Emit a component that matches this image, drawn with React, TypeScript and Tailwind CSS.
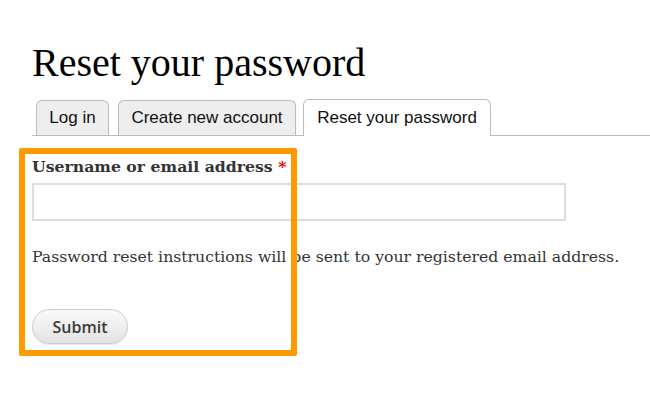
import React from "react";

export default function App() {
  return (
    <div className="relative w-[650px] h-[418px] bg-white overflow-hidden">
      <div className="pl-[32px] pt-[40px]">
        <h1 className="text-[40px] leading-[46px] text-black font-['Liberation_Serif',serif] font-normal">
          Reset your password
        </h1>
        <div className="mt-[13px] flex items-end border-b border-[#bbb] font-['Liberation_Sans',Arial,sans-serif] text-[17px] text-[#111]">
          <div className="ml-[4px] w-[73px] h-[35px] flex items-center justify-center bg-[#eee] border border-b-0 border-[#bbb] rounded-t-[6px]">
            Log in
          </div>
          <div className="ml-[9px] w-[178px] h-[35px] flex items-center justify-center bg-[#eee] border border-b-0 border-[#bbb] rounded-t-[6px]">
            Create new account
          </div>
          <div className="ml-[7px] w-[188px] h-[37px] flex items-center justify-center bg-white border border-b-0 border-[#bbb] rounded-t-[6px] -mb-px pb-px">
            Reset your password
          </div>
        </div>
        <div className="pt-[21px] font-['DejaVu_Serif',serif] text-[#333]">
          <label className="block font-bold text-[15.7px] leading-[20px]">
            Username or email address <span className="text-[#e00]">*</span>
          </label>
          <input
            type="text"
            className="mt-[6px] block w-[534px] h-[38px] border-2 border-[#ddd] bg-white outline-none"
          />
          <p className="mt-[26px] text-[15.7px] leading-[20px]">
            Password reset instructions will be sent to your registered email address.
          </p>
          <button className="mt-[42px] w-[96px] h-[35px] rounded-full border border-[#ccc] bg-gradient-to-b from-[#fafafa] to-[#e2e2e2] shadow-[0_1px_1px_rgba(0,0,0,0.1)] font-['Open_Sans',sans-serif] font-semibold text-[16px] text-[#3a3a3a]">
            Submit
          </button>
        </div>
      </div>
      <div className="absolute left-[19px] top-[148px] w-[278px] h-[208px] border-[6px] border-[#ff9900] rounded-[2px] pointer-events-none" />
    </div>
  );
}
